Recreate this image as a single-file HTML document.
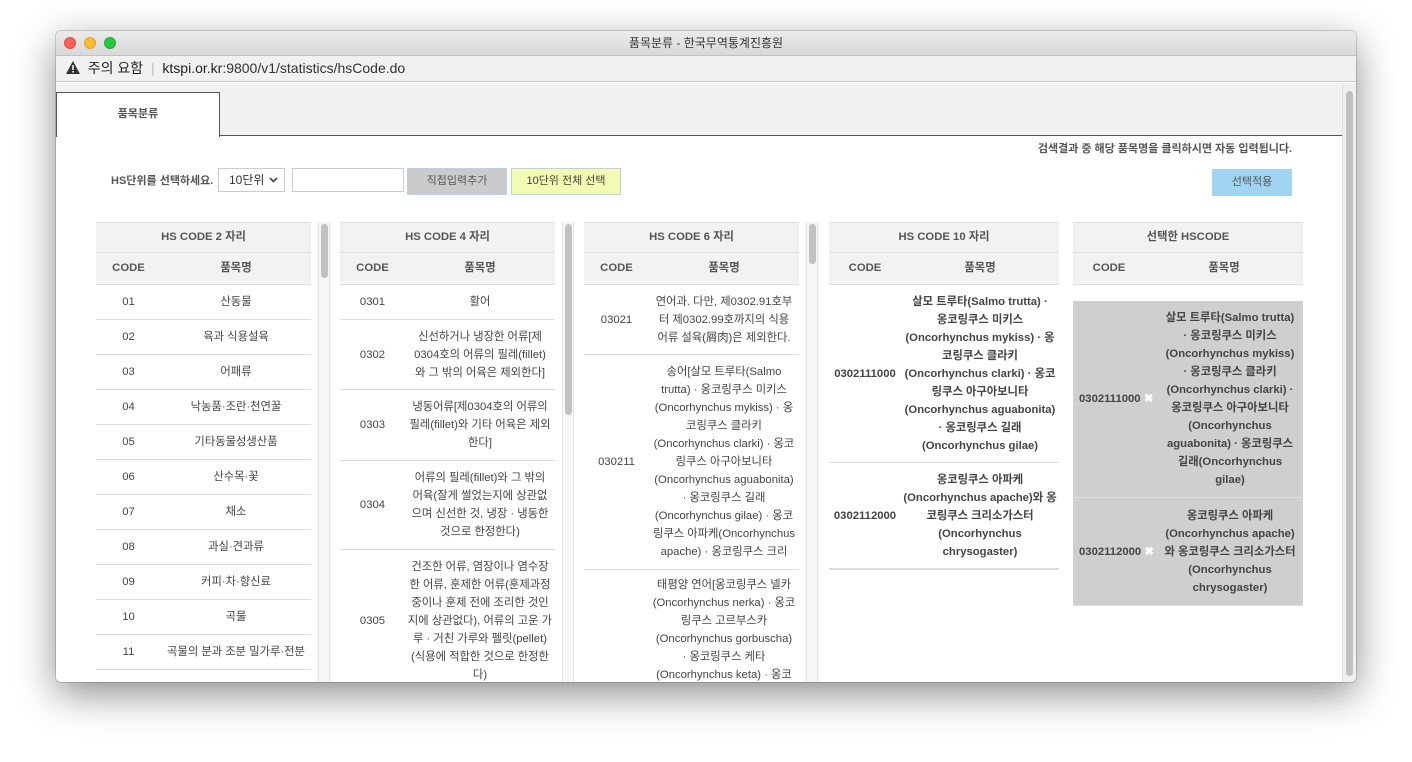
<!DOCTYPE html>
<html><head><meta charset="utf-8"><style>
*{box-sizing:border-box;margin:0;padding:0}
body{width:1412px;height:762px;background:#fff;position:relative;overflow:hidden;font-family:"Liberation Sans","Noto Sans CJK KR",sans-serif;color:#444}
#win{position:absolute;left:56px;top:31px;width:1300px;height:651px;border-radius:5px;overflow:hidden;background:#fff;box-shadow:0 12px 40px rgba(0,0,0,.45),0 0 0 1px rgba(0,0,0,.15)}
#title{height:25px;background:linear-gradient(#ebebeb,#d9d9d9);border-bottom:1px solid #c2c2c2;text-align:center;font-size:12px;line-height:25px;color:#333}
.dot{position:absolute;top:6px;width:12px;height:12px;border-radius:50%}
#addr{height:26px;background:#f1f1f1;border-bottom:1px solid #c8c8c8;font-size:14px;line-height:25px;color:#222;padding-left:10px}
#content{position:absolute;left:0;top:52px;width:1286px;height:599px;background:#fff;overflow:hidden}
#tabbar{position:absolute;left:0;top:0;width:1286px;height:53px;background:#f1f1f1;border-bottom:1px solid #555}
#tab{position:absolute;left:0;top:9px;width:164px;height:45px;background:#fff;border:1px solid #555;border-bottom:none;font-size:11px;font-weight:bold;text-align:center;line-height:42px;color:#555}
#sb{position:absolute;left:1286px;top:52px;width:14px;height:599px;background:#f0f0f0;border-left:1px solid #ddd}
.col{position:absolute;top:139px;overflow:hidden;height:460px;font-size:11.3px}
.h1{height:31px;background:#f2f2f2;border-top:1px solid #ddd;border-bottom:1px solid #ddd;text-align:center;line-height:29px;font-weight:bold;color:#555}
.h2{height:32px;background:#f2f2f2;border-bottom:1px solid #ddd;display:flex;font-weight:bold;color:#555;line-height:31px}
.h2 div,.r div{text-align:center}
.r{display:flex;align-items:center;border-bottom:1px solid #ddd;line-height:18px}
.vs{position:absolute;top:139px;width:12px;height:460px;background:#f6f6f6;border-left:1px solid #e6e6e6;border-right:1px solid #e6e6e6}
.th{position:absolute;left:2px;width:7px;background:#c1c1c1;border-radius:4px}
.b{font-weight:bold}
.sel{background:#cfcfcf;border-bottom:1px solid #e0e0e0}
</style></head><body>
<div id="win">
<div id="title"><span class="dot" style="left:8px;background:#fc5f57;border:1px solid #df4744"></span><span class="dot" style="left:28px;background:#fdbc2e;border:1px solid #de9f34"></span><span class="dot" style="left:48px;background:#28c840;border:1px solid #27aa35"></span>품목분류 - 한국무역통계진흥원</div>
<div id="addr"><svg width="14" height="13" viewBox="0 0 14 13" style="vertical-align:-1px"><path d="M7 0L14 13H0Z" fill="#333"/><rect x="6.2" y="4" width="1.6" height="5" fill="#f1f1f1"/><rect x="6.2" y="10" width="1.6" height="1.6" fill="#f1f1f1"/></svg>&nbsp; 주의 요함 <span style="color:#bbb">&nbsp;|&nbsp;</span> ktspi.or.kr<span style="color:#333">:9800/v1/statistics/hsCode.do</span></div>
<div id="content">
<div id="tabbar"><div id="tab">품목분류</div></div>
<div style="position:absolute;right:50px;top:57px;font-size:11px;font-weight:bold;color:#555">검색결과 중 해당 품목명을 클릭하시면 자동 입력됩니다.</div>
<div style="position:absolute;left:55px;top:89px;font-size:11px;font-weight:bold;color:#555">HS단위를 선택하세요.</div>
<div style="position:absolute;left:162px;top:85px;width:67px;height:24px;border:1px solid #ccc;font-size:12px;line-height:22px;padding-left:10px;color:#333">10단위 <svg style="position:absolute;right:6px;top:8px" width="9" height="6" viewBox="0 0 9 6"><path d="M1 1L4.5 4.5L8 1" stroke="#444" stroke-width="1.6" fill="none"/></svg></div>
<div style="position:absolute;left:236px;top:85px;width:112px;height:24px;border:1px solid #ccc"></div>
<div style="position:absolute;left:351px;top:85px;width:100px;height:27px;background:#cbcbcb;border:1px solid #b7cff0;font-size:11px;text-align:center;line-height:25px;color:#555">직접입력추가</div>
<div style="position:absolute;left:455px;top:85px;width:110px;height:27px;background:#f3fbb3;border:1px solid #b7cff0;font-size:11px;text-align:center;line-height:25px;color:#444">10단위 전체 선택</div>
<div style="position:absolute;left:1156px;top:86px;width:80px;height:27px;background:#9fd5f3;font-size:11px;text-align:center;line-height:27px;color:#555">선택적용</div>

<div class="col" style="left:40px;width:215px">
<div class="h1">HS CODE 2 자리</div>
<div class="h2"><div style="width:65px">CODE</div><div style="flex:1">품목명</div></div>
<div class="r" style="height:35px"><div style="width:65px">01</div><div style="flex:1">산동물</div></div>
<div class="r" style="height:35px"><div style="width:65px">02</div><div style="flex:1">육과 식용설육</div></div>
<div class="r" style="height:35px"><div style="width:65px">03</div><div style="flex:1">어패류</div></div>
<div class="r" style="height:35px"><div style="width:65px">04</div><div style="flex:1">낙농품·조란·천연꿀</div></div>
<div class="r" style="height:35px"><div style="width:65px">05</div><div style="flex:1">기타동물성생산품</div></div>
<div class="r" style="height:35px"><div style="width:65px">06</div><div style="flex:1">산수목·꽃</div></div>
<div class="r" style="height:35px"><div style="width:65px">07</div><div style="flex:1">채소</div></div>
<div class="r" style="height:35px"><div style="width:65px">08</div><div style="flex:1">과실·견과류</div></div>
<div class="r" style="height:35px"><div style="width:65px">09</div><div style="flex:1">커피·차·향신료</div></div>
<div class="r" style="height:35px"><div style="width:65px">10</div><div style="flex:1">곡물</div></div>
<div class="r" style="height:35px"><div style="width:65px">11</div><div style="flex:1">곡물의 분과 조분 밀가루·전분</div></div>
</div>
<div class="vs" style="left:262px"><div class="th" style="top:2px;height:54px"></div></div>

<div class="col" style="left:284px;width:215px">
<div class="h1">HS CODE 4 자리</div>
<div class="h2"><div style="width:65px">CODE</div><div style="flex:1">품목명</div></div>
<div class="r" style="height:35px"><div style="width:65px">0301</div><div style="flex:1">활어</div></div>
<div class="r" style="height:70px"><div style="width:65px">0302</div><div style="flex:1">신선하거나 냉장한 어류[제<br>0304호의 어류의 필레(fillet)<br>와 그 밖의 어육은 제외한다]</div></div>
<div class="r" style="height:71px"><div style="width:65px">0303</div><div style="flex:1">냉동어류[제0304호의 어류의<br>필레(fillet)와 기타 어육은 제외<br>한다]</div></div>
<div class="r" style="height:89px"><div style="width:65px">0304</div><div style="flex:1">어류의 필레(fillet)와 그 밖의<br>어육(잘게 썰었는지에 상관없<br>으며 신선한 것, 냉장 · 냉동한<br>것으로 한정한다)</div></div>
<div class="r" style="height:142px"><div style="width:65px">0305</div><div style="flex:1">건조한 어류, 염장이나 염수장<br>한 어류, 훈제한 어류(훈제과정<br>중이나 훈제 전에 조리한 것인<br>지에 상관없다), 어류의 고운 가<br>루 · 거친 가루와 펠릿(pellet)<br>(식용에 적합한 것으로 한정한<br>다)</div></div>
</div>
<div class="vs" style="left:506px"><div class="th" style="top:2px;height:191px"></div></div>

<div class="col" style="left:528px;width:215px">
<div class="h1">HS CODE 6 자리</div>
<div class="h2"><div style="width:65px">CODE</div><div style="flex:1">품목명</div></div>
<div class="r" style="height:70px"><div style="width:65px">03021</div><div style="flex:1">연어과. 다만, 제0302.91호부<br>터 제0302.99호까지의 식용<br>어류 설육(屑肉)은 제외한다.</div></div>
<div class="r" style="height:215px"><div style="width:65px">030211</div><div style="flex:1">송어[살모 트루타(Salmo<br>trutta) · 옹코링쿠스 미키스<br>(Oncorhynchus mykiss) · 옹<br>코링쿠스 클라키<br>(Oncorhynchus clarki) · 옹코<br>링쿠스 아구아보니타<br>(Oncorhynchus aguabonita)<br>· 옹코링쿠스 길래<br>(Oncorhynchus gilae) · 옹코<br>링쿠스 아파케(Oncorhynchus<br>apache) · 옹코링쿠스 크리</div></div>
<div class="r" style="height:130px;align-items:flex-start;padding-top:6px"><div style="width:65px"></div><div style="flex:1">태평양 연어[옹코링쿠스 넬카<br>(Oncorhynchus nerka) · 옹코<br>링쿠스 고르부스카<br>(Oncorhynchus gorbuscha)<br>· 옹코링쿠스 케타<br>(Oncorhynchus keta) · 옹코</div></div>
</div>
<div class="vs" style="left:750px"><div class="th" style="top:2px;height:40px"></div></div>

<div class="col" style="left:773px;width:230px">
<div class="h1">HS CODE 10 자리</div>
<div class="h2"><div style="width:72px">CODE</div><div style="flex:1">품목명</div></div>
<div class="r b" style="height:178px"><div style="width:72px">0302111000</div><div style="flex:1">살모 트루타(Salmo trutta) ·<br>옹코링쿠스 미키스<br>(Oncorhynchus mykiss) · 옹<br>코링쿠스 클라키<br>(Oncorhynchus clarki) · 옹코<br>링쿠스 아구아보니타<br>(Oncorhynchus aguabonita)<br>· 옹코링쿠스 길래<br>(Oncorhynchus gilae)</div></div>
<div class="r b" style="height:107px;border-bottom:2px solid #ddd"><div style="width:72px">0302112000</div><div style="flex:1">옹코링쿠스 아파케<br>(Oncorhynchus apache)와 옹<br>코링쿠스 크리소가스터<br>(Oncorhynchus<br>chrysogaster)</div></div>
</div>

<div class="col" style="left:1017px;width:230px">
<div class="h1">선택한 HSCODE</div>
<div class="h2"><div style="width:72px">CODE</div><div style="flex:1">품목명</div></div>
<div style="height:16px"></div>
<div class="r b sel" style="height:197px"><div style="width:84px;padding-left:6px;text-align:left">0302111000 <span style="color:#fff">✖</span></div><div style="flex:1">살모 트루타(Salmo trutta)<br>· 옹코링쿠스 미키스<br>(Oncorhynchus mykiss)<br>· 옹코링쿠스 클라키<br>(Oncorhynchus clarki) ·<br>옹코링쿠스 아구아보니타<br>(Oncorhynchus<br>aguabonita) · 옹코링쿠스<br>길래(Oncorhynchus<br>gilae)</div></div>
<div class="r b sel" style="height:108px"><div style="width:84px;padding-left:6px;text-align:left">0302112000 <span style="color:#fff">✖</span></div><div style="flex:1">옹코링쿠스 아파케<br>(Oncorhynchus apache)<br>와 옹코링쿠스 크리소가스터<br>(Oncorhynchus<br>chrysogaster)</div></div>
</div>
</div>
<div id="sb"><div style="position:absolute;left:3px;top:8px;width:7px;height:585px;background:#c1c1c1;border-radius:4px"></div></div>
</div>
</body></html>
